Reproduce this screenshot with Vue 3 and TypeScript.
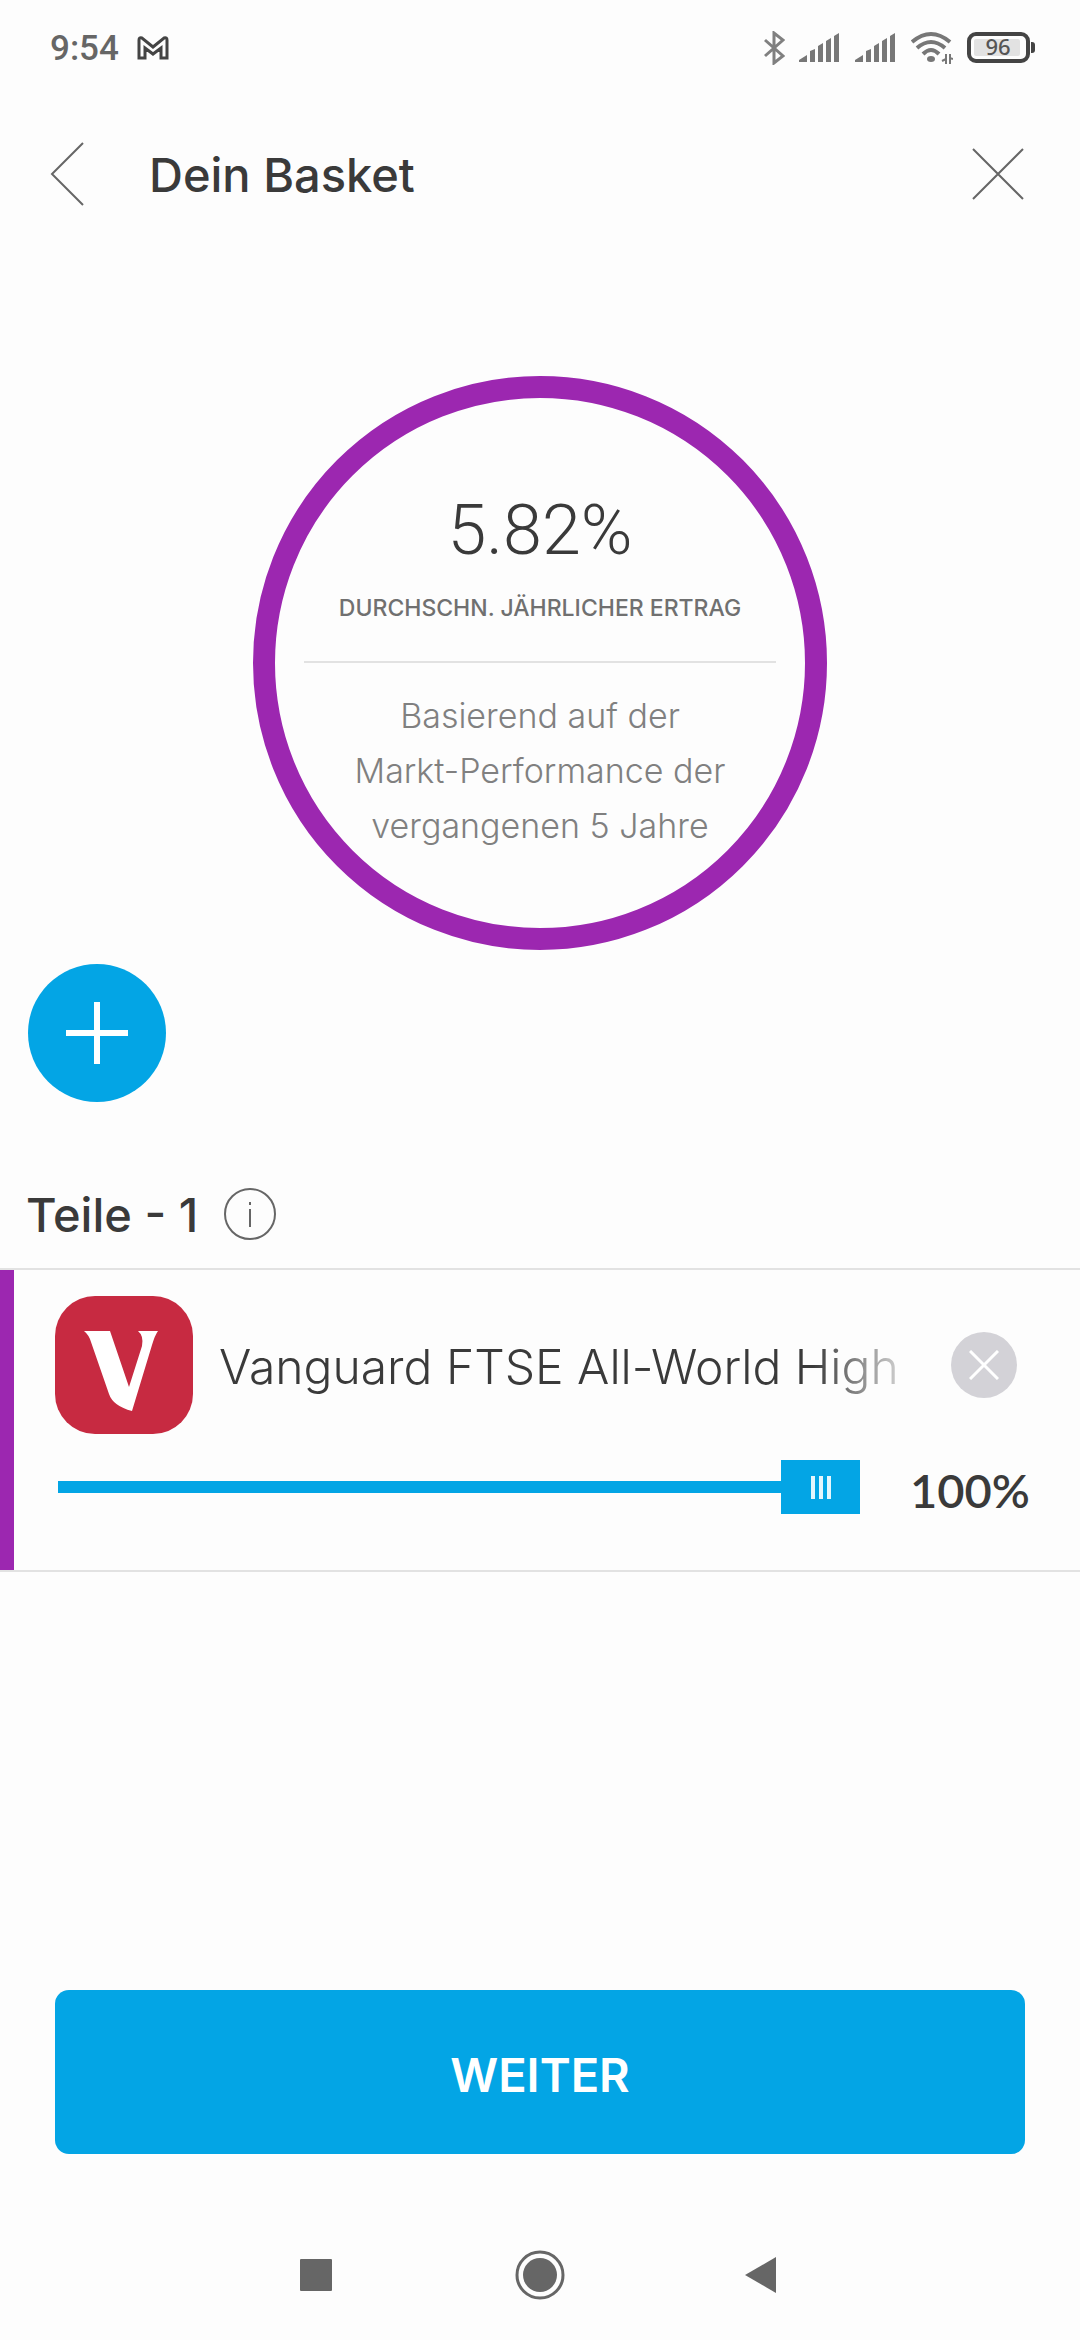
<script setup lang="ts">
import { ref } from 'vue'

interface Holding {
  name: string
  share: number
}

const averageYield = '5.82%'
const holdings = ref<Holding[]>([{ name: 'Vanguard FTSE All-World High', share: 100 }])
const signals = [1, 2]
</script>

<template>
  <div class="screen">
    <div class="status">
      <div class="status-side">
        <span class="clock">9:54</span>
        <svg class="mail" viewBox="0 0 32 24" width="32" height="24" aria-hidden="true">
          <path d="M2 22V4Q2 1 5 2L16 11L27 2Q30 1 30 4V22H24V12L16 18L8 12V22Z" />
        </svg>
      </div>
      <div class="status-side icons">
        <svg class="bluetooth" viewBox="0 0 22 34" width="22" height="34" aria-hidden="true">
          <path d="M2 9L20 25L11 32V2L20 9L2 25" />
        </svg>
        <svg v-for="s in signals" :key="s" class="signal" viewBox="0 0 42 30" width="42" height="30" aria-hidden="true">
          <path d="M0 29V27L8 22V29ZM11 29V18L16 16V29ZM19 29V13L24 10V29ZM27 29V8L32 5V29ZM35 29V3L40 0V29Z" />
        </svg>
        <svg class="wifi" viewBox="0 0 42 34" width="42" height="34" aria-hidden="true">
          <path class="arc" d="M1 11Q20 -5 39 11M6 17Q20 5 34 17M12 23Q20 15 28 23" />
          <ellipse cx="20" cy="28" rx="4" ry="3" />
          <path class="arrows" d="M35 23V33M35 28L31 30M39 23V33M39 27L42 28" />
        </svg>
        <svg class="battery" viewBox="0 0 70 32" width="70" height="32" aria-hidden="true">
          <rect class="shell" x="2" y="2" width="59" height="27" rx="7" />
          <rect class="charge" x="7" y="7" width="46" height="17" rx="2" />
          <path class="nub" d="M64 10H65Q68 10 68 13V18Q68 21 65 21H64Z" />
          <text x="31" y="23" text-anchor="middle">96</text>
        </svg>
      </div>
    </div>

    <header class="bar">
      <button class="plain" type="button" aria-label="Zurück">
        <svg viewBox="0 0 34 64" width="34" height="64"><path d="M33 1L2 32L33 63" /></svg>
      </button>
      <h1>Dein Basket</h1>
      <button class="plain" type="button" aria-label="Schließen">
        <svg viewBox="0 0 52 52" width="52" height="52"><path d="M1 1L51 51M51 1L1 51" /></svg>
      </button>
    </header>

    <section class="ring">
      <p class="yield">{{ averageYield }}</p>
      <p class="caption">DURCHSCHN. JÄHRLICHER ERTRAG</p>
      <p class="basis">Basierend auf der<br />Markt-Performance der<br />vergangenen 5 Jahre</p>
    </section>

    <button class="add" type="button" aria-label="Hinzufügen">
      <svg viewBox="0 0 62 62" width="62" height="62"><path d="M31 0V62M0 31H62" /></svg>
    </button>

    <div class="heading">
      <h2>Teile - {{ holdings.length }}</h2>
      <button class="plain" type="button" aria-label="Information">
        <svg viewBox="0 0 52 52" width="52" height="52">
          <circle cx="26" cy="26" r="25" />
          <path d="M26 21V39M26 14V17" />
        </svg>
      </button>
    </div>

    <article v-for="h in holdings" :key="h.name" class="holding">
      <div class="row">
        <svg class="logo" viewBox="0 0 138 138" width="138" height="138" aria-hidden="true">
          <rect width="138" height="138" rx="40" />
          <path d="M29 35H55L74 91L87 50Q89 40 83 35H103Q100 39 97 49L77 115Q58 110 54 98L36 46Q34 39 29 35Z" />
        </svg>
        <label class="name" for="share">{{ h.name }}</label>
        <button class="remove" type="button" aria-label="Entfernen">
          <svg viewBox="0 0 30 30" width="30" height="30"><path d="M1 1L29 29M29 1L1 29" /></svg>
        </button>
      </div>
      <div class="row share">
        <input id="share" v-model.number="h.share" type="range" min="0" max="100" />
        <output for="share">{{ h.share }}%</output>
      </div>
    </article>

    <button class="next" type="button">WEITER</button>

    <nav class="system">
      <button class="plain" type="button" aria-label="Übersicht">
        <svg viewBox="0 0 50 50" width="50" height="50"><rect x="9" y="9" width="32" height="32" rx="1" /></svg>
      </button>
      <button class="plain" type="button" aria-label="Startseite">
        <svg viewBox="0 0 50 50" width="50" height="50">
          <circle class="outer" cx="25" cy="25" r="23" />
          <circle cx="25" cy="25" r="17" />
        </svg>
      </button>
      <button class="plain" type="button" aria-label="Zurück">
        <svg viewBox="0 0 50 50" width="50" height="50"><path d="M6 25L37 7V43Z" /></svg>
      </button>
    </nav>
  </div>
</template>

<style>
body {
  background: #fdfdfd;
}
</style>

<style scoped>
.screen {
  --ink: #3a3a3a;
  --blue: #03a5e5;
  --purple: #9c27b0;
  display: flex;
  flex-direction: column;
  min-height: 100vh;
  color: var(--ink);
  font-family: Inter, 'Liberation Sans', sans-serif;
}

h1,
h2,
p {
  margin: 0;
}

button {
  display: flex;
  align-items: center;
  justify-content: center;
  margin: 0;
  padding: 0;
  border: 0;
  background: none;
  font: inherit;
  cursor: pointer;
}

svg {
  display: block;
  flex: none;
}

.plain svg {
  fill: none;
  stroke: #666;
  stroke-width: 2;
}

.status {
  display: flex;
  align-items: center;
  justify-content: space-between;
  height: 96px;
  padding: 0 43px 0 50px;
  color: #666;
}

.status-side {
  display: flex;
  align-items: center;
  gap: 18px;
}

.icons {
  gap: 14px;
}

.clock {
  padding-top: 2px;
  font: 500 35px/40px Roboto, sans-serif;
}

.mail {
  fill: none;
  stroke: #444;
  stroke-width: 3;
}

.bluetooth {
  fill: none;
  stroke: #808080;
  stroke-width: 3;
}

.signal,
.wifi {
  fill: #777;
}

.wifi .arc {
  fill: none;
  stroke: #777;
  stroke-width: 4;
}

.wifi .arrows {
  fill: none;
  stroke: #777;
  stroke-width: 2;
}

.battery .shell {
  fill: none;
  stroke: #444;
  stroke-width: 4;
}

.battery .charge {
  fill: #e2e2e2;
}

.battery .nub {
  fill: #444;
}

.battery text {
  fill: #555;
  font: 500 22px 'Noto Sans', sans-serif;
}

.bar {
  display: flex;
  align-items: center;
  height: 156px;
  padding: 0 56px 0 50px;
}

h1,
h2 {
  padding-top: 2px;
  font-size: 47px;
  font-weight: 500;
  line-height: 56px;
}

h1 {
  flex: 1;
  padding-left: 65px;
}

.ring {
  box-sizing: border-box;
  display: flex;
  flex-direction: column;
  align-items: center;
  align-self: center;
  width: 574px;
  height: 574px;
  margin-top: 124px;
  padding-top: 92px;
  border: 22px solid var(--purple);
  border-radius: 50%;
  text-align: center;
}

.yield {
  font: 300 70px/80px Roboto, sans-serif;
}

.caption {
  width: 472px;
  padding: 22px 0 37px;
  border-bottom: 2px solid #e2e2e2;
  color: #707070;
  font-size: 23px;
  font-weight: 500;
  line-height: 32px;
}

.basis {
  padding-top: 25px;
  color: #808080;
  font-size: 34px;
  font-weight: 300;
  line-height: 55px;
}

.add {
  width: 138px;
  height: 138px;
  margin: 14px 0 0 28px;
  border-radius: 50%;
  background: var(--blue);
}

.add svg {
  stroke: #fff;
  stroke-width: 6;
}

.heading {
  display: flex;
  align-items: center;
  gap: 26px;
  height: 108px;
  margin-top: 58px;
  padding-left: 26px;
}

.holding {
  display: flex;
  flex-direction: column;
  gap: 26px;
  padding-bottom: 56px;
  border-top: 2px solid #e2e2e2;
  border-bottom: 2px solid #e2e2e2;
  background: linear-gradient(90deg, var(--purple) 14px, transparent 14px);
}

.row {
  display: flex;
  align-items: center;
  padding: 26px 63px 0 55px;
}

.logo {
  fill: #c72a41;
}

.logo path {
  fill: #fff;
}

.name {
  flex: 1;
  min-width: 0;
  margin: 0 48px 0 26px;
  padding-top: 4px;
  overflow: hidden;
  white-space: nowrap;
  font-size: 48px;
  font-weight: 300;
  line-height: 60px;
  mask-image: linear-gradient(90deg, #000 calc(100% - 90px), rgb(0 0 0 / 0.2));
}

.remove {
  width: 66px;
  height: 66px;
  border-radius: 50%;
  background: #d3d2d7;
}

.remove svg {
  stroke: #fff;
  stroke-width: 3;
}

.share {
  padding: 0 50px 0 58px;
}

.share input {
  flex: 1;
  min-width: 0;
  height: 54px;
  margin: 0 50px 0 0;
  appearance: none;
  background: none;
}

.share input::-webkit-slider-runnable-track {
  height: 12px;
  background: var(--blue);
}

.share input::-webkit-slider-thumb {
  appearance: none;
  width: 79px;
  height: 54px;
  margin-top: -21px;
  border: 0;
  border-radius: 0;
  background:
    repeating-linear-gradient(90deg, #e4f6fd 0 4px, transparent 4px 8px) center / 20px 23px no-repeat,
    var(--blue);
}

output {
  padding-top: 6px;
  font: 600 47px/48px Lato, sans-serif;
}

.next {
  height: 164px;
  margin: auto 55px 0;
  padding-top: 4px;
  border-radius: 14px;
  background: var(--blue);
  color: #fff;
  font-size: 47px;
  font-weight: 600;
}

.system {
  display: flex;
  justify-content: center;
  gap: 174px;
  padding: 96px 0 40px;
}

.system svg {
  fill: #666;
  stroke: none;
}

.system .outer {
  fill: none;
  stroke: #666;
  stroke-width: 3;
}
</style>
